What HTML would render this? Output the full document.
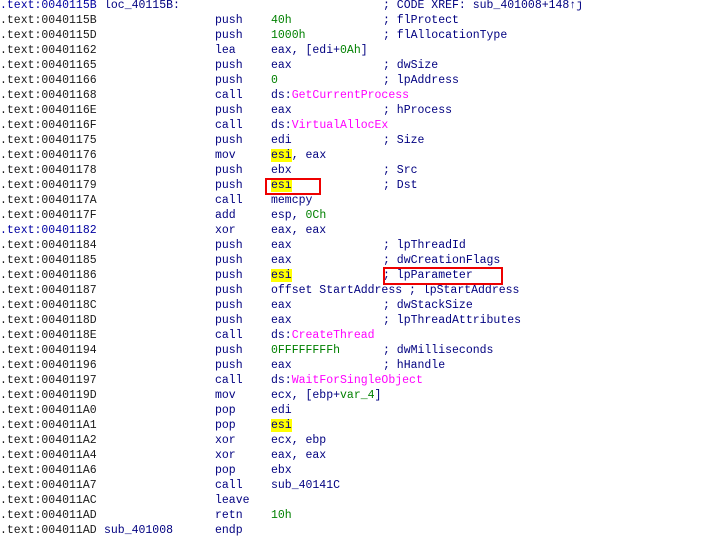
<!DOCTYPE html>
<html><head><meta charset="utf-8"><style>
body{margin:0;width:711px;height:541px;background:#fff;overflow:hidden;position:relative;font-family:"Liberation Mono",monospace;font-size:11.5px;}
.l{position:absolute;left:0;height:15px;line-height:15px;white-space:pre;width:711px}
.l span{position:absolute;top:0}
.a{left:0;color:#1a1a1a}
.ab{left:0;color:#0000a0}
.lb{left:104px;color:#000080}
.m{left:215px;color:#000080}
.o{left:271px;color:#000080}
.c{left:383px;color:#000080}
.g{color:#008000}
.p{color:#ff00ff}
.y{background:#ffff00}
.box{position:absolute;border:2px solid #ee0000;box-sizing:border-box}
</style></head><body>
<div class="l" style="top:-2px"><span class="ab">.text:0040115B</span><span class="lb">loc_40115B:</span><span class="c">; CODE XREF: sub_401008+148↑j</span></div>
<div class="l" style="top:13px"><span class="a">.text:0040115B</span><span class="m">push</span><span class="o g">40h</span><span class="c">; flProtect</span></div>
<div class="l" style="top:28px"><span class="a">.text:0040115D</span><span class="m">push</span><span class="o g">1000h</span><span class="c">; flAllocationType</span></div>
<div class="l" style="top:43px"><span class="a">.text:00401162</span><span class="m">lea</span><span class="o">eax, [edi+<span style="position:static" class="g">0Ah</span>]</span></div>
<div class="l" style="top:58px"><span class="a">.text:00401165</span><span class="m">push</span><span class="o">eax</span><span class="c">; dwSize</span></div>
<div class="l" style="top:73px"><span class="a">.text:00401166</span><span class="m">push</span><span class="o g">0</span><span class="c">; lpAddress</span></div>
<div class="l" style="top:88px"><span class="a">.text:00401168</span><span class="m">call</span><span class="o">ds:<span style="position:static" class="p">GetCurrentProcess</span></span></div>
<div class="l" style="top:103px"><span class="a">.text:0040116E</span><span class="m">push</span><span class="o">eax</span><span class="c">; hProcess</span></div>
<div class="l" style="top:118px"><span class="a">.text:0040116F</span><span class="m">call</span><span class="o">ds:<span style="position:static" class="p">VirtualAllocEx</span></span></div>
<div class="l" style="top:133px"><span class="a">.text:00401175</span><span class="m">push</span><span class="o">edi</span><span class="c">; Size</span></div>
<div class="l" style="top:148px"><span class="a">.text:00401176</span><span class="m">mov</span><span class="o"><span style="position:static" class="y">esi</span>, eax</span></div>
<div class="l" style="top:163px"><span class="a">.text:00401178</span><span class="m">push</span><span class="o">ebx</span><span class="c">; Src</span></div>
<div class="l" style="top:178px"><span class="a">.text:00401179</span><span class="m">push</span><span class="o"><span style="position:static" class="y">esi</span></span><span class="c">; Dst</span></div>
<div class="l" style="top:193px"><span class="a">.text:0040117A</span><span class="m">call</span><span class="o">memcpy</span></div>
<div class="l" style="top:208px"><span class="a">.text:0040117F</span><span class="m">add</span><span class="o">esp, <span style="position:static" class="g">0Ch</span></span></div>
<div class="l" style="top:223px"><span class="ab">.text:00401182</span><span class="m">xor</span><span class="o">eax, eax</span></div>
<div class="l" style="top:238px"><span class="a">.text:00401184</span><span class="m">push</span><span class="o">eax</span><span class="c">; lpThreadId</span></div>
<div class="l" style="top:253px"><span class="a">.text:00401185</span><span class="m">push</span><span class="o">eax</span><span class="c">; dwCreationFlags</span></div>
<div class="l" style="top:268px"><span class="a">.text:00401186</span><span class="m">push</span><span class="o"><span style="position:static" class="y">esi</span></span><span class="c">; lpParameter</span></div>
<div class="l" style="top:283px"><span class="a">.text:00401187</span><span class="m">push</span><span class="o">offset StartAddress ; lpStartAddress</span></div>
<div class="l" style="top:298px"><span class="a">.text:0040118C</span><span class="m">push</span><span class="o">eax</span><span class="c">; dwStackSize</span></div>
<div class="l" style="top:313px"><span class="a">.text:0040118D</span><span class="m">push</span><span class="o">eax</span><span class="c">; lpThreadAttributes</span></div>
<div class="l" style="top:328px"><span class="a">.text:0040118E</span><span class="m">call</span><span class="o">ds:<span style="position:static" class="p">CreateThread</span></span></div>
<div class="l" style="top:343px"><span class="a">.text:00401194</span><span class="m">push</span><span class="o g">0FFFFFFFFh</span><span class="c">; dwMilliseconds</span></div>
<div class="l" style="top:358px"><span class="a">.text:00401196</span><span class="m">push</span><span class="o">eax</span><span class="c">; hHandle</span></div>
<div class="l" style="top:373px"><span class="a">.text:00401197</span><span class="m">call</span><span class="o">ds:<span style="position:static" class="p">WaitForSingleObject</span></span></div>
<div class="l" style="top:388px"><span class="a">.text:0040119D</span><span class="m">mov</span><span class="o">ecx, [ebp+<span style="position:static" class="g">var_4</span>]</span></div>
<div class="l" style="top:403px"><span class="a">.text:004011A0</span><span class="m">pop</span><span class="o">edi</span></div>
<div class="l" style="top:418px"><span class="a">.text:004011A1</span><span class="m">pop</span><span class="o"><span style="position:static" class="y">esi</span></span></div>
<div class="l" style="top:433px"><span class="a">.text:004011A2</span><span class="m">xor</span><span class="o">ecx, ebp</span></div>
<div class="l" style="top:448px"><span class="a">.text:004011A4</span><span class="m">xor</span><span class="o">eax, eax</span></div>
<div class="l" style="top:463px"><span class="a">.text:004011A6</span><span class="m">pop</span><span class="o">ebx</span></div>
<div class="l" style="top:478px"><span class="a">.text:004011A7</span><span class="m">call</span><span class="o">sub_40141C</span></div>
<div class="l" style="top:493px"><span class="a">.text:004011AC</span><span class="m">leave</span></div>
<div class="l" style="top:508px"><span class="a">.text:004011AD</span><span class="m">retn</span><span class="o g">10h</span></div>
<div class="l" style="top:523px"><span class="a">.text:004011AD</span><span class="lb">sub_401008</span><span class="m">endp</span></div>
<div class="box" style="left:265px;top:178px;width:56px;height:17px"></div>
<div class="box" style="left:383px;top:267px;width:120px;height:18px"></div>
</body></html>
